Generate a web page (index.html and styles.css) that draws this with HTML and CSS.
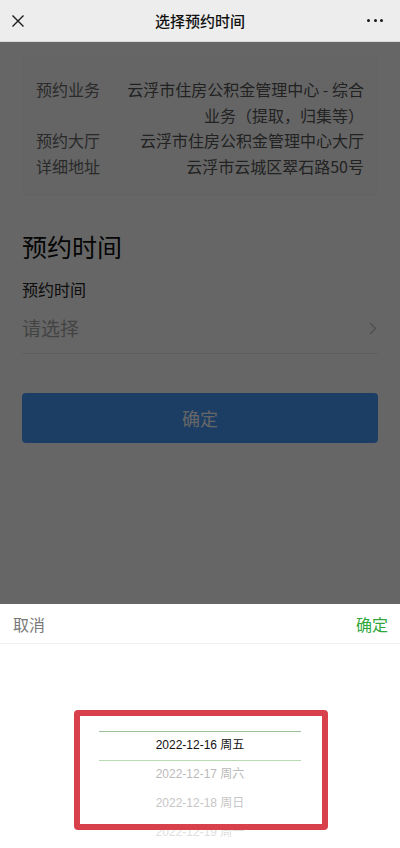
FILE: index.html
```html
<!DOCTYPE html>
<html lang="zh-CN">

<head>
    <meta charset="UTF-8">
    <meta name="viewport" content="width=device-width, initial-scale=1.0">
    <title>选择预约时间</title>
    <link rel="stylesheet" href="styles.css">
</head>

<body>
    <div class="navbar">
        <span class="nav-close">
            <svg width="12" height="12" viewBox="0 0 12 12">
                <path d="M0.5 0.5 L11.5 11.5 M11.5 0.5 L0.5 11.5" stroke="#1a1a1a" stroke-width="1.4" fill="none"/>
            </svg>
        </span>
        <div class="nav-title">选择预约时间</div>
        <span class="nav-more"><i></i><i></i><i></i></span>
    </div>

    <div class="page">
        <div class="info-box">
            <div class="info-row">
                <div class="info-label">预约业务</div>
                <div class="info-value">云浮市住房公积金管理中心 - 综合业务（提取，归集等）</div>
            </div>
            <div class="info-row">
                <div class="info-label">预约大厅</div>
                <div class="info-value">云浮市住房公积金管理中心大厅</div>
            </div>
            <div class="info-row">
                <div class="info-label">详细地址</div>
                <div class="info-value">云浮市云城区翠石路50号</div>
            </div>
        </div>

        <h2 class="section-title">预约时间</h2>
        <div class="field-label">预约时间</div>
        <div class="field-select">
            <span class="placeholder">请选择</span>
            <svg class="arrow" width="8" height="13" viewBox="0 0 8 13">
                <path d="M1 1 L6.5 6.5 L1 12" stroke="#c8c8c8" stroke-width="1.5" fill="none"/>
            </svg>
        </div>

        <button class="submit-btn">确定</button>
    </div>

    <!-- dimmed layer behind the picker -->
    <div class="mask"></div>

    <div class="picker">
        <div class="picker-header">
            <span class="picker-cancel">取消</span>
            <span class="picker-ok">确定</span>
        </div>
        <div class="picker-body">
            <div class="picker-indicator"></div>
            <ul class="picker-list">
                <li class="current">2022-12-16 周五</li>
                <li class="far-1">2022-12-17 周六</li>
                <li class="far-2">2022-12-18 周日</li>
                <li class="far-3">2022-12-19 周一</li>
            </ul>
        </div>
    </div>

    <!-- red marker drawn over the screenshot -->
    <div class="highlight-box"></div>
</body>

</html>
```

FILE: styles.css
```css
*{
    box-sizing: border-box;
}
body{
    margin: 0;
    width: 400px;
    height: 848px;
    overflow: hidden;
    background: #fff;
    font-family: "Noto Sans CJK SC", sans-serif;
    position: relative;
}

.navbar{
    position: relative;
    z-index: 3;
    height: 42px;
    background: #ededed;
    border-bottom: 1px solid #d9d9d9;
    display: flex;
    align-items: center;
    justify-content: space-between;
    padding: 0 17px 0 12px;
}
.nav-close{
    width: 12px;
    height: 12px;
    display: flex;
}
.nav-title{
    position: absolute;
    left: 0;
    right: 0;
    text-align: center;
    font-size: 15px;
    font-weight: 500;
    color: #111;
    pointer-events: none;
}
.nav-more{
    display: flex;
    gap: 3.5px;
}
.nav-more i{
    width: 3px;
    height: 3px;
    border-radius: 50%;
    background: #1a1a1a;
}

.page{
    padding: 15px 22px 0;
}
.info-box{
    background: #fdfdfd;
    border: 1px solid #f7f7f7;
    border-radius: 4px;
    padding: 19px 13px 15px;
    font-size: 16px;
    line-height: 25.5px;
}
.info-row{
    display: flex;
}
.info-label{
    width: 89px;
    flex-shrink: 0;
    color: #6a6a6a;
}
.info-value{
    flex: 1;
    text-align: right;
    color: #555;
}

.section-title{
    margin: 34px 0 0;
    font-size: 25px;
    font-weight: normal;
    line-height: 34px;
    color: #0d0d0d;
}
.field-label{
    margin-top: 15px;
    font-size: 16px;
    line-height: 22px;
    color: #222;
}
.field-select{
    display: flex;
    align-items: center;
    justify-content: space-between;
    padding: 15px 0 12px;
    line-height: 26px;
    border-bottom: 1px solid #ececec;
}
.placeholder{
    font-size: 19px;
    color: #a9a9a9;
}
.arrow{
    margin-right: 1px;
}

.submit-btn{
    display: block;
    width: 100%;
    height: 50px;
    margin-top: 39px;
    border: none;
    border-radius: 4px;
    background: #469bfa;
    color: #fff;
    font-family: "Noto Sans CJK SC", sans-serif;
    font-size: 18px;
}

.mask{
    position: absolute;
    top: 42px;
    left: 0;
    right: 0;
    bottom: 0;
    z-index: 2;
    background: rgba(0, 0, 0, 0.6);
}

.picker{
    position: absolute;
    left: 0;
    right: 0;
    bottom: 0;
    height: 244px;
    z-index: 4;
    background: #fff;
}
.picker-header{
    height: 40px;
    display: flex;
    align-items: center;
    justify-content: space-between;
    padding: 0 12px 0 13px;
    border-bottom: 1px solid #f2f2f2;
    font-size: 16px;
}
.picker-cancel{
    color: #787878;
}
.picker-ok{
    color: #2ea83b;
}
.picker-body{
    position: relative;
    height: 204px;
    overflow: hidden;
}
.picker-indicator{
    position: absolute;
    top: 87px;
    left: 99px;
    right: 99px;
    height: 30px;
    border-top: 1px solid #98c194;
    border-bottom: 1px solid #b9d9b5;
}
.picker-list{
    list-style: none;
    margin: 0;
    padding: 87px 0 0;
    text-align: center;
    font-family: "Liberation Sans", "Noto Sans CJK SC", sans-serif;
    font-size: 12px;
}
.picker-list li{
    height: 29px;
    line-height: 29px;
}
.picker-list .current{
    color: #111;
}
.picker-list .far-1{
    color: #bababa;
}
.picker-list .far-2{
    color: #c6c6c6;
}
.picker-list .far-3{
    color: #dedede;
}

.highlight-box{
    position: absolute;
    left: 74px;
    top: 710px;
    width: 254px;
    height: 120px;
    z-index: 5;
    border: 6px solid #d8404b;
    border-radius: 4px;
}
```
